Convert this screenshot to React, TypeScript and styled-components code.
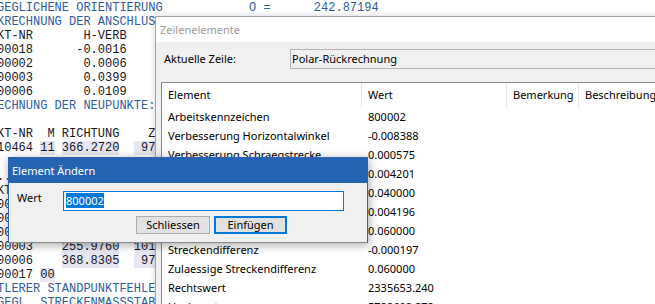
import React from 'react';
import styled, { createGlobalStyle } from 'styled-components';

const Global = createGlobalStyle`
  html, body { margin: 0; padding: 0; background: #ffffff; overflow: hidden; }
  #root { width: 655px; height: 304px; }
`;

const Desktop = styled.div`
  position: relative;
  width: 655px;
  height: 304px;
  overflow: hidden;
  background: #ffffff;
`;

/* ---------- background console listing ---------- */
const Console = styled.div`
  margin-left: -3px;
  padding-top: 0.5px;
  font-family: "Liberation Mono", "Courier New", monospace;
  font-size: 12px;
  line-height: 14.1px;
  white-space: pre;
`;

const Line = styled.div<{ $head?: boolean }>`
  height: 14.1px;
  color: ${(p) => (p.$head ? '#2f5d9c' : '#15151d')};
`;

const Hl = styled.span`
  background: #e7e7f3;
`;

/* ---------- generic window parts ---------- */
const Window = styled.section`
  position: absolute;
  left: 155px;
  top: 16px;
  width: 520px;
  height: 310px;
  box-sizing: border-box;
  border: 1px solid #a3a3a3;
  background: #f0f0f0;
  box-shadow: 0 0 6px rgba(0, 0, 0, 0.18);
  display: flex;
  flex-direction: column;
  font-family: "Noto Sans", "Open Sans", sans-serif;
  font-size: 11px;
  color: #000;
`;

const TitleBar = styled.div<{ $active?: boolean }>`
  flex: none;
  height: 25px;
  line-height: 25px;
  padding-left: ${(p) => (p.$active ? 3 : 4)}px;
  background: ${(p) => (p.$active ? '#2564b2' : '#ffffff')};
  color: ${(p) => (p.$active ? '#ffffff' : '#9b9b9b')};
  font-size: 11px;
`;

const WindowBody = styled.div`
  flex: 1;
  display: flex;
  flex-direction: column;
  padding: 7px 0 0 5px;
`;

const FieldRow = styled.div`
  display: flex;
  align-items: center;
  height: 20px;
`;

const FieldLabel = styled.div`
  width: 126px;
  padding-left: 3px;
  margin-top: -2px;
`;

const ReadOnlyBox = styled.div`
  flex: 1;
  height: 20px;
  box-sizing: border-box;
  border: 1px solid #b4b4b4;
  background: #f0f0f0;
  padding-left: 1px;
  line-height: 18px;
`;

const ListView = styled.div`
  margin-top: 13px;
  flex: 1;
  border: 1px solid #828790;
  background: #ffffff;
`;

const Cols = styled.div<{ $header?: boolean }>`
  display: grid;
  grid-template-columns: 200px 145px 72px 1fr;
  height: ${(p) => (p.$header ? 24 : 19)}px;
  line-height: ${(p) => (p.$header ? 24 : 19)}px;
  white-space: nowrap;
`;

const HeadCell = styled.div`
  padding-left: 6px;
  border-right: 1px solid #e5e5e5;
  overflow: hidden;
`;

const Cell = styled.div`
  padding-left: 6px;
  overflow: hidden;
`;

/* ---------- dialog ---------- */
const Dialog = styled.section`
  position: absolute;
  left: 8px;
  top: 157px;
  width: 360px;
  height: 86px;
  box-sizing: border-box;
  border: 1px solid #2a63b0;
  border-bottom-color: #8a8a8a;
  background: #f0f0f0;
  box-shadow: 1px 2px 9px rgba(0, 0, 0, 0.35);
  display: flex;
  flex-direction: column;
  font-family: "Noto Sans", "Open Sans", sans-serif;
  font-size: 11px;
  color: #000;
`;

const DialogBody = styled.div`
  flex: 1;
  padding: 8px 0 0 8px;
  display: flex;
  flex-direction: column;
`;

const InputRow = styled.div`
  display: grid;
  grid-template-columns: 46px 281px;
  align-items: start;
`;

const InputLabel = styled.div`
  line-height: 14px;
`;

const TextInput = styled.div`
  height: 20px;
  box-sizing: border-box;
  border: 1px solid #0078d7;
  background: #ffffff;
  padding-left: 2px;
  line-height: 18px;
`;

const Selected = styled.span`
  background: #0078d7;
  color: #ffffff;
`;

const ButtonRow = styled.div`
  display: flex;
  gap: 4px;
  margin: 5px 0 0 119px;
`;

const Button = styled.div<{ $default?: boolean; $w: number }>`
  width: ${(p) => p.$w}px;
  height: 18px;
  box-sizing: border-box;
  background: #e1e1e1;
  border: ${(p) => (p.$default ? '2px solid #0078d7' : '1px solid #adadad')};
  line-height: ${(p) => (p.$default ? 14 : 16)}px;
  text-align: center;
`;

type Seg = string | { h: string };
const consoleLines: { head?: boolean; segs: Seg[] }[] = [
  { head: true, segs: ['GEGLICHENE ORIENTIERUNG            O =      242.87194'] },
  { head: true, segs: ['KRECHNUNG DER ANSCHLUSSPUNKTE:'] },
  { segs: ['KT-NR       H-VERB    S-VERB'] },
  { segs: ['00018      -0.0016     0.0021'] },
  { segs: ['00002       0.0006    -0.0031'] },
  { segs: ['00003       0.0399    -0.0154'] },
  { segs: ['00006       0.0109    -0.0087'] },
  { head: true, segs: ['ECHNUNG DER NEUPUNKTE:'] },
  { segs: [''] },
  { segs: ['KT-NR  M RICHTUNG    Z-WINKEL'] },
  { segs: ['10464 ', { h: '11' }, ' ', { h: '366.2720' }, '  ', { h: ' 97.1234' }] },
  { segs: [''] },
  { segs: ['..'] },
  { segs: ['KT-NR  M RICHTUNG    Z-WINKEL'] },
  { segs: ['00018'] },
  { segs: ['00002'] },
  { segs: ['00001'] },
  { segs: ['00003    ', { h: '255.9760' }, '  ', { h: '101.2345' }] },
  { segs: ['00006    ', { h: '368.8305' }, '  ', { h: ' 97.8765' }] },
  { segs: ['00017 ', { h: '00' }] },
  { head: true, segs: ['TLERER STANDPUNKTFEHLER'] },
  { head: true, segs: ['GEGL. STRECKENMASSSTAB'] },
];

const rows: [string, string][] = [
  ['Arbeitskennzeichen', '800002'],
  ['Verbesserung Horizontalwinkel', '-0.008388'],
  ['Verbesserung Schraegstrecke', '0.000575'],
  ['Standpunktfehler', '0.004201'],
  ['Zulaessiger Standpunktfehler', '0.040000'],
  ['Querabweichung', '0.004196'],
  ['Zulaessige Querabweichung', '0.060000'],
  ['Streckendifferenz', '-0.000197'],
  ['Zulaessige Streckendifferenz', '0.060000'],
  ['Rechtswert', '2335653.240'],
  ['Hochwert', '5782609.872'],
];

export default function App() {
  return (
    <Desktop>
      <Global />
      <Console>
        {consoleLines.map((l, i) => (
          <Line key={i} $head={l.head}>
            {l.segs.map((s, j) =>
              typeof s === 'string' ? <React.Fragment key={j}>{s}</React.Fragment> : <Hl key={j}>{s.h}</Hl>
            )}
          </Line>
        ))}
      </Console>

      <Window>
        <TitleBar>Zeilenelemente</TitleBar>
        <WindowBody>
          <FieldRow>
            <FieldLabel>Aktuelle Zeile:</FieldLabel>
            <ReadOnlyBox>Polar-Rückrechnung</ReadOnlyBox>
          </FieldRow>
          <ListView>
            <Cols $header>
              <HeadCell>Element</HeadCell>
              <HeadCell>Wert</HeadCell>
              <HeadCell>Bemerkung</HeadCell>
              <HeadCell>Beschreibung</HeadCell>
            </Cols>
            {rows.map(([name, value]) => (
              <Cols key={name}>
                <Cell>{name}</Cell>
                <Cell>{value}</Cell>
                <Cell />
                <Cell />
              </Cols>
            ))}
          </ListView>
        </WindowBody>
      </Window>

      <Dialog>
        <TitleBar $active>Element Ändern</TitleBar>
        <DialogBody>
          <InputRow>
            <InputLabel>Wert</InputLabel>
            <TextInput>
              <Selected>800002</Selected>
            </TextInput>
          </InputRow>
          <ButtonRow>
            <Button $w={74}>Schliessen</Button>
            <Button $w={73} $default>
              Einfügen
            </Button>
          </ButtonRow>
        </DialogBody>
      </Dialog>
    </Desktop>
  );
}
